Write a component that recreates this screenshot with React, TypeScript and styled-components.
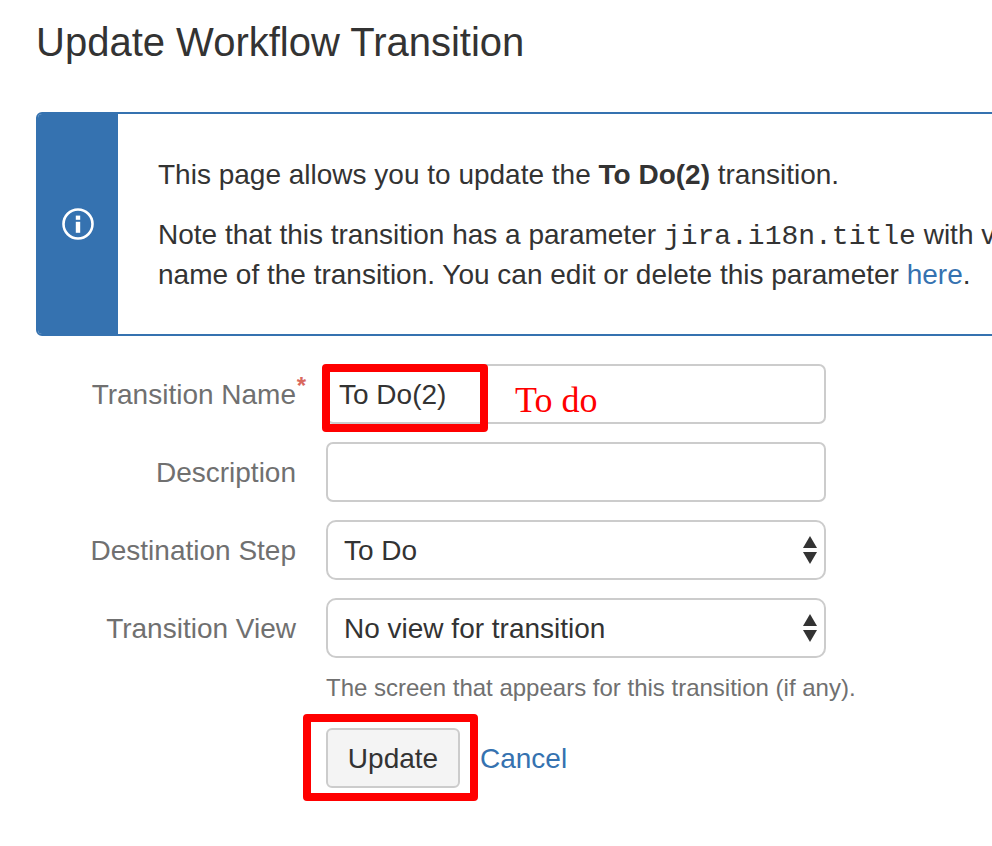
import React from "react";
import styled, { createGlobalStyle } from "styled-components";

const Global = createGlobalStyle`
  html, body { margin: 0; padding: 0; background: #fff; overflow: hidden; }
  body { font-family: "Liberation Sans", Arial, sans-serif; color: #333; }
`;

const Page = styled.main`
  width: 992px;
  height: 846px;
  overflow: hidden;
  padding: 19px 0 0 36px;
  box-sizing: border-box;
`;

const Title = styled.h1`
  margin: 0 0 47px 0;
  font-size: 40px;
  line-height: 46px;
  font-weight: 400;
  color: #333;
`;

const Notice = styled.section`
  display: flex;
  width: 1100px;
  height: 224px;
  box-sizing: border-box;
  border: 2px solid #3572b0;
  border-radius: 6px;
  overflow: hidden;
`;

const NoticeRail = styled.div`
  flex: 0 0 80px;
  background: #3572b0;
  display: flex;
  align-items: center;
  justify-content: center;
  margin-left: -2px;
  padding-left: 2px;
`;

const NoticeBody = styled.div`
  padding: 41px 0 0 40px;
  font-size: 28px;
  line-height: 40px;
`;

const NoticePara = styled.p`
  margin: 0 0 20px;
  white-space: nowrap;
`;

const Code = styled.code`
  font-family: "Liberation Mono", monospace;
  font-size: 28px;
  line-height: 20px;
`;

const Link = styled.a`
  color: #3572b0;
  text-decoration: none;
`;

const Form = styled.form`
  display: flex;
  flex-direction: column;
  gap: 18px;
  margin-top: 28px;
`;

const Row = styled.div`
  display: flex;
  align-items: center;
  gap: 30px;
  height: 60px;
`;

const Label = styled.label`
  position: relative;
  width: 260px;
  padding-top: 2px;
  text-align: right;
  font-size: 28px;
  line-height: 40px;
  color: #707070;
  white-space: nowrap;
`;

const Star = styled.span`
  position: absolute;
  right: -10px;
  top: -1px;
  font-size: 24px;
  font-weight: 700;
  line-height: 28px;
  color: #d9685e;
`;

const FieldWrap = styled.div`
  position: relative;
  width: 500px;
  height: 60px;
`;

const Input = styled.input`
  width: 100%;
  height: 100%;
  box-sizing: border-box;
  border: 2px solid #ccc;
  border-radius: 7px;
  padding: 2px 11px 0;
  font: 28px "Liberation Sans", Arial, sans-serif;
  color: #333;
  background: #fff;
  outline: none;
`;

const Select = styled.select`
  width: 100%;
  height: 100%;
  box-sizing: border-box;
  border: 2px solid #ccc;
  border-radius: 10px;
  padding: 0 16px;
  font: 28px "Liberation Sans", Arial, sans-serif;
  color: #333;
  background: #fff;
  appearance: none;
  outline: none;
`;

const Arrows = styled.svg`
  position: absolute;
  right: 9px;
  top: 15px;
  width: 14px;
  height: 30px;
  pointer-events: none;
`;

const Highlight = styled.div`
  position: absolute;
  left: -4px;
  top: 0;
  width: 166px;
  height: 68px;
  box-sizing: border-box;
  border: 8px solid #ff0000;
  border-radius: 4px;
`;

const Scribble = styled.span`
  position: absolute;
  left: 189px;
  top: 12px;
  font-family: "Liberation Serif", serif;
  font-size: 36px;
  line-height: 48px;
  color: #ff0000;
`;

const Hint = styled.div`
  margin: -2px 0 0 290px;
  font-size: 24px;
  line-height: 28px;
  color: #707070;
  white-space: nowrap;
`;

const Actions = styled.div`
  position: relative;
  display: flex;
  align-items: center;
  gap: 21px;
  margin: 8px 0 0 290px;
  height: 60px;
`;

const Button = styled.button`
  width: 134px;
  height: 60px;
  box-sizing: border-box;
  border: 2px solid #ccc;
  border-radius: 6px;
  background: #f4f4f4;
  font: 28px "Liberation Sans", Arial, sans-serif;
  color: #333;
  padding: 2px 0 0;
`;

const ActionHighlight = styled.div`
  position: absolute;
  left: -23px;
  top: -14px;
  width: 175px;
  height: 87px;
  box-sizing: border-box;
  border: 8px solid #ff0000;
  border-radius: 4px;
`;

const ActionLink = styled(Link)`
  font-size: 28px;
  margin-left: -1px;
  padding-top: 2px;
`;

const InfoIcon = () => (
  <svg width="32" height="32" viewBox="0 0 32 32" aria-hidden="true">
    <circle cx="16" cy="16" r="14.5" fill="none" stroke="#fff" strokeWidth="2.6" />
    <rect x="13.8" y="7.6" width="4.4" height="4.2" fill="#fff" />
    <rect x="13.8" y="13.8" width="4.4" height="11" fill="#fff" />
  </svg>
);

const SelectArrows = () => (
  <Arrows viewBox="0 0 14 30" aria-hidden="true">
    <polygon points="7,1 14,13 0,13" fill="#333" />
    <polygon points="0,17 14,17 7,29" fill="#333" />
  </Arrows>
);

export default function App() {
  return (
    <Page>
      <Global />
      <Title>Update Workflow Transition</Title>
      <Notice>
        <NoticeRail>
          <InfoIcon />
        </NoticeRail>
        <NoticeBody>
          <NoticePara>
            This page allows you to update the <b>To Do(2)</b> transition.
          </NoticePara>
          <NoticePara>
            Note that this transition has a parameter <Code>jira.i18n.title</Code> with value To Do(2).
            <br />
            name of the transition. You can edit or delete this parameter <Link href="#">here</Link>.
          </NoticePara>
        </NoticeBody>
      </Notice>
      <Form>
        <Row>
          <Label>
            Transition Name<Star>*</Star>
          </Label>
          <FieldWrap>
            <Input defaultValue="To Do(2)" />
            <Highlight />
            <Scribble>To do</Scribble>
          </FieldWrap>
        </Row>
        <Row>
          <Label>Description</Label>
          <FieldWrap>
            <Input />
          </FieldWrap>
        </Row>
        <Row>
          <Label>Destination Step</Label>
          <FieldWrap>
            <Select defaultValue="To Do">
              <option>To Do</option>
            </Select>
            <SelectArrows />
          </FieldWrap>
        </Row>
        <Row>
          <Label>Transition View</Label>
          <FieldWrap>
            <Select defaultValue="No view for transition">
              <option>No view for transition</option>
            </Select>
            <SelectArrows />
          </FieldWrap>
        </Row>
        <Hint>The screen that appears for this transition (if any).</Hint>
        <Actions>
          <Button type="button">Update</Button>
          <ActionLink href="#">Cancel</ActionLink>
          <ActionHighlight />
        </Actions>
      </Form>
    </Page>
  );
}
